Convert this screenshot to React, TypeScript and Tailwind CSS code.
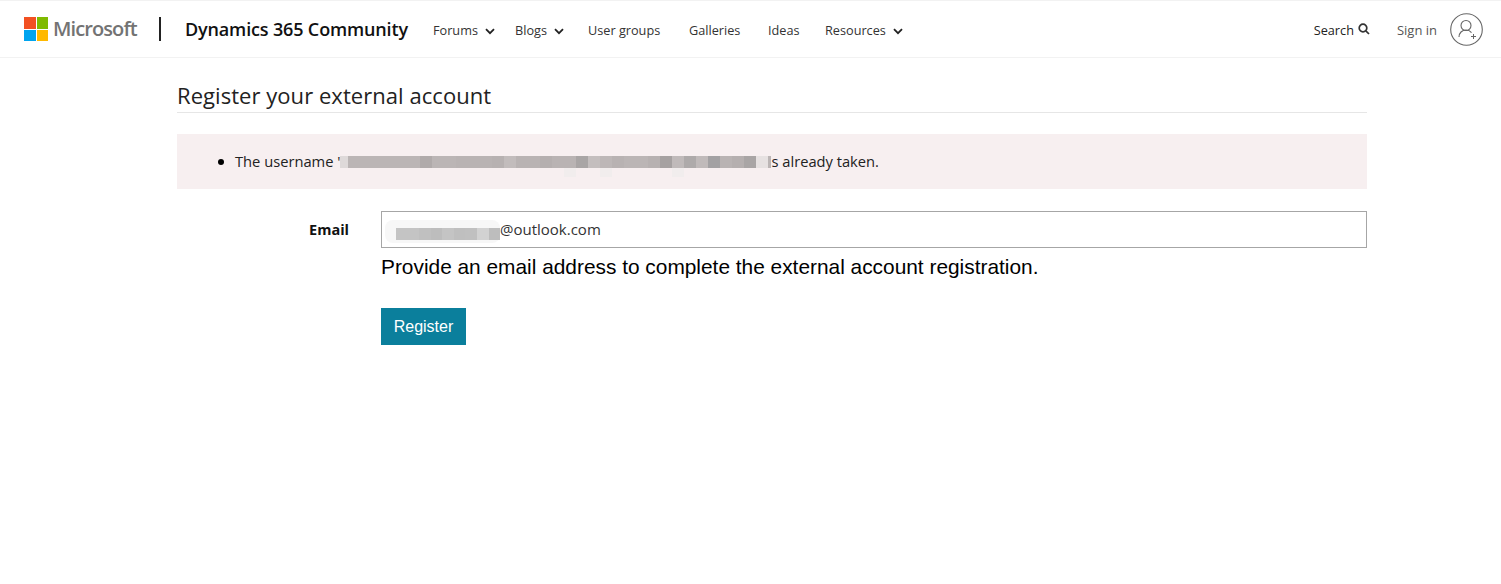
import { FC } from 'react'

const sans = "font-['Open_Sans','Noto_Sans',sans-serif]"

// pixelated blur over the username, one entry per 12px block
const usernameBlocks = [
  '#bbb5b5', '#bbb5b5', '#bbb5b5', '#bbb5b5', '#bbb5b5', '#bbb5b5', '#b0aaaa', '#bbb5b5', '#bbb5b5', '#b9b3b3',
  '#b9b3b3', '#b9b3b3', '#b7b1b1', '#c2bcbc', '#b9b3b3', '#b9b3b3', '#b5afaf', '#b9b3b3', '#b9b3b3', '#a9a5a5',
  '#c4bebe', '#bdb7b7', '#b8b2b2', '#bbb5b5', '#bbb5b5', '#b7b1b1', '#a6a1a1', '#c0baba', '#aeaaaa', '#c0baba',
  '#a3a1a3', '#b9b3b3', '#b5afaf', '#a9a5a5', '#e6e1e1',
]
const emailBlocks = ['#c4c4c4', '#c4c4c4', '#c0c0c0', '#bdbdbd', '#c4c4c4', '#bfbfbf', '#c0c0c0', '#d2d2d2', '#bdbdbd']

const Chevron: FC = () => (
  <svg width="10" height="7" viewBox="0 0 10 7" fill="none" stroke="#222" strokeWidth="1.8" className="ml-[7px] mt-[3px]">
    <path d="M1 1.2 5 5.2 9 1.2" />
  </svg>
)

const NavItem: FC<{ label: string; menu?: boolean; className: string }> = ({ label, menu, className }) => (
  <a className={`flex items-center text-[12.7px] text-[#333] ${className}`}>
    {label}
    {menu && <Chevron />}
  </a>
)

const Header: FC = () => (
  <header className="flex items-center h-[58px] border-t border-b border-[#f2f2f2] pl-[24px] pr-[18px]">
    <div className="grid grid-cols-2 gap-[1px] w-[24px] h-[24px] shrink-0">
      <span className="bg-[#f25022]" />
      <span className="bg-[#7fba00]" />
      <span className="bg-[#00a4ef]" />
      <span className="bg-[#ffb900]" />
    </div>
    <span className="ml-[5px] w-[84px] text-[20px] font-semibold tracking-[-0.9px] text-[#737373]">Microsoft</span>
    <span className="ml-[22px] w-[2px] h-[24px] bg-[#222]" />
    <span className="ml-[24px] w-[248px] text-[18px] font-semibold tracking-[-0.15px] text-[#111] whitespace-nowrap">
      Dynamics 365 Community
    </span>
    <nav className="flex items-center pt-[3px]">
      <NavItem label="Forums" menu className="w-[82px]" />
      <NavItem label="Blogs" menu className="w-[73px]" />
      <NavItem label="User groups" className="w-[101px]" />
      <NavItem label="Galleries" className="w-[79px]" />
      <NavItem label="Ideas" className="w-[57px]" />
      <NavItem label="Resources" menu />
    </nav>
    <div className="flex items-center ml-auto">
      <a className="flex items-center pt-[3px] text-[12.7px] text-[#222]">
        Search
        <svg width="12" height="12" viewBox="0 0 12 12" fill="none" stroke="#333" strokeWidth="1.7" className="ml-[4px] mb-[3px]">
          <circle cx="5" cy="5" r="3.8" />
          <path d="M7.8 7.8 11 11" />
        </svg>
      </a>
      <a className="ml-[27px] pt-[3px] text-[13px] text-[#555]">Sign in</a>
      <svg width="33" height="33" viewBox="0 0 33 33" fill="none" stroke="#666" className="ml-[13px]">
        <circle cx="16.5" cy="16.5" r="15.8" strokeWidth="1.1" />
        <circle cx="16" cy="12.5" r="5" strokeWidth="1.1" />
        <path d="M9 24c0-4 3-7 7-7 2.5 0 4.3 1 5.5 2.6" strokeWidth="1.1" />
        <path d="M21 23.5h5M23.5 21v5" strokeWidth="1" />
      </svg>
    </div>
  </header>
)

const UsernameBlur: FC = () => (
  <span className="relative inline-flex w-[431px] h-[12px] align-[-1px] mx-0">
    <span className="w-[8px] h-[12px] shrink-0 bg-[#ded9d9]" />
    {usernameBlocks.map((color, i) => (
      <span key={i} className="w-[12px] h-[12px] shrink-0" style={{ backgroundColor: color }} />
    ))}
    <span className="absolute left-[224px] top-[12px] w-[12px] h-[9px] bg-[#f1eded]" />
    <span className="absolute left-[260px] top-[12px] w-[12px] h-[9px] bg-[#f1eded]" />
    <span className="absolute left-[332px] top-[12px] w-[12px] h-[9px] bg-[#f1eded]" />
    <span className="absolute right-0 top-0 w-[3px] h-[12px] bg-[#bbb5b5]" />
  </span>
)

const EmailBlur: FC = () => (
  <span className="relative inline-flex w-[104px] h-[12px] mt-[9px]">
    <span className="absolute left-[-11px] top-[-8px] w-[115px] h-[23px] rounded-[8px] bg-[#f7f7f7]" />
    {emailBlocks.map((color, i) => (
      <span key={i} className="relative w-[12px] h-[12px]" style={{ backgroundColor: color }} />
    ))}
  </span>
)

const App: FC = () => {
  return (
    <div className={`min-h-[584px] bg-white ${sans}`}>
      <Header />
      <main className="w-[1190px] ml-[177px] pt-[20px]">
        <h1 className="h-[35px] border-b border-[#e6e6e6] text-[22px] leading-[34px] text-[#222] tracking-[0.05px]">
          Register your external account
        </h1>
        <div className="flex items-center h-[55px] mt-[21px] bg-[#f7eff0] pl-[41px] text-[14.7px] text-[#222]">
          <span className="w-[6px] h-[6px] rounded-full bg-black mr-[11px]" />
          <span className="whitespace-nowrap">
            The username '
            <UsernameBlur />
            s already taken.
          </span>
        </div>
        <div className="flex mt-[22px]">
          <label className="w-[172px] pt-[8px] text-right text-[14.5px] font-bold text-[#111]">Email</label>
          <div className="ml-[32px] flex-1">
            <div className="flex items-center h-[37px] border border-[#a6a6a6] pl-[14px] text-[15px] text-[#333]">
              <EmailBlur />
              @outlook.com
            </div>
            <p className="mt-[5px] font-['Liberation_Sans',sans-serif] text-[20.87px] leading-[28px] text-black">
              Provide an email address to complete the external account registration.
            </p>
            <button className="block mt-[27px] w-[85px] h-[37px] bg-[#0b7f9c] font-['Liberation_Sans',sans-serif] text-[16px] text-white">
              Register
            </button>
          </div>
        </div>
      </main>
    </div>
  )
}

export default App
